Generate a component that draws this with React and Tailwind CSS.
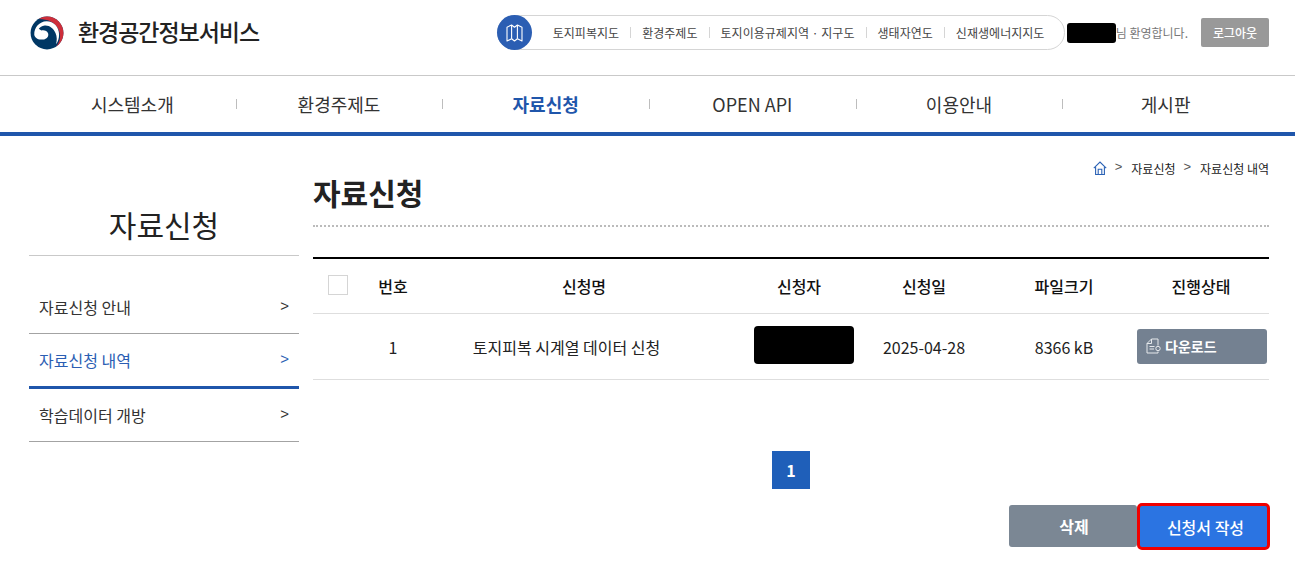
import React from "react";

function Logo() {
  return (
    <svg width="34" height="34" viewBox="0 0 36 36" className="shrink-0">
      <circle cx="18" cy="18" r="17.4" fill="#003764" />
      <path d="M9.5 3.2C12 1.500 15 0.600 18 0.600C27.600 0.600 35.400 8.400 35.400 18C35.400 24 32.400 29.400 27.500 32.600C30.800 28.600 32.200 24.200 31.800 20C31 11.500 24 5 16 4C14 3.700 11.500 3.400 9.500 3.200Z" fill="#cd2e3a" />
      <path d="M4.500 20C4.300 12 10 5.800 17.500 5.600C25 5.500 30.800 11.500 30.800 19.500C30.800 23.500 29.800 27 27.500 30C28.700 26 28.700 22 27 18C25 13 20.500 9.500 15.500 10C12.500 10.300 10.500 11.800 9.300 13.500L12 15.300C15 14.500 18.200 15.800 19.200 18.500C20 21.500 18 24 15 24.800C11 25.500 6 24.500 4.500 20Z" fill="#ffffff" />
    </svg>
  );
}

function HomeIcon() {
  return (
    <svg width="14" height="15" viewBox="0 0 14 15" fill="none" stroke="#2b62b5" strokeWidth="1.1" className="shrink-0">
      <path d="M0.8 7.2 7 1l6.2 6.2" />
      <path d="M2.6 6v7.5h8.8V6" />
      <path d="M5.2 13.5V8.3h3.6v5.2" />
    </svg>
  );
}

function FileIcon() {
  return (
    <svg width="16" height="16" viewBox="0 0 16 16" fill="none" stroke="#e5e8eb" strokeWidth="1" className="shrink-0">
      <path d="M12 7.500V1H5.500L1 5.500V15h11v-1.500" />
      <path d="M1 5.500h4.500V1" />
      <path d="M3.500 8.500h5M3.500 11h4.500" />
      <circle cx="12" cy="10.500" r="2.200" />
    </svg>
  );
}

function MapIcon() {
  return (
    <svg width="17" height="18" viewBox="0 0 17 18" fill="none" stroke="#ffffff" strokeWidth="1.1" strokeLinejoin="round">
      <path d="M1 3.200 5.600 1l2.900 2.200L11.400 1 16 3.200V17l-4.600-2.200L8.500 17l-2.900-2.200L1 17z" />
      <path d="M5.600 1v13.800M11.400 1v13.800" />
    </svg>
  );
}

const quick = ["토지피복지도", "환경주제도", "토지이용규제지역 · 지구도", "생태자연도", "신재생에너지지도"];
const nav = ["시스템소개", "환경주제도", "자료신청", "OPEN API", "이용안내", "게시판"];

function Header() {
  return (
    <header className="h-[76px] border-b border-[#c9c9c9] flex items-center pl-[30px] pr-[26px] pb-[10px]">
      <Logo />
      <span className="ml-[14px] -mt-[3px] text-[23px] font-medium text-[#222] tracking-[-1.05px] leading-none">환경공간정보서비스</span>
      <div className="ml-auto flex items-center">
        <div className="relative flex items-center h-[35px] w-[568px] border border-[#d5d5d5] rounded-full pl-[55px]">
          <span className="absolute -left-px -top-px w-[35px] h-[35px] rounded-full bg-[#2b5eb3] flex items-center justify-center">
            <MapIcon />
          </span>
          {quick.map((q, i) => (
            <React.Fragment key={q}>
              {i > 0 && <span className="w-px h-[11px] bg-[#d5d5d5] mx-[11px]" />}
              <span className="text-[12px] text-[#444] whitespace-nowrap tracking-[0.03px]">{q}</span>
            </React.Fragment>
          ))}
        </div>
        <span className="ml-[2px] w-[49px] h-[20px] bg-black rounded-[3px]" />
        <span className="text-[12px] text-[#777] whitespace-nowrap">님 환영합니다.</span>
        <span className="ml-[13px] w-[68px] h-[29px] rounded-[2px] bg-[#999] text-white text-[12px] font-medium flex items-center justify-center">로그아웃</span>
      </div>
    </header>
  );
}

function Nav() {
  return (
    <nav className="h-[60px] border-b-[4px] border-[#1f56ab] grid grid-cols-6 pl-[29px] pr-[26px]">
      {nav.map((n, i) => (
        <div key={n} className="relative flex items-center justify-center">
          <span className={"text-[18px] " + (i === 2 ? "font-bold text-[#1f56ab]" : "text-[#333]")}>{n}</span>
          {i > 0 && <span className="absolute left-0 top-[23px] w-px h-[10px] bg-[#bdbdbd]" />}
        </div>
      ))}
    </nav>
  );
}

function SideItem({ label, active, className }) {
  return (
    <div className={"flex items-center justify-between pl-[10px] pr-[10px] text-[16px] " + (active ? "text-[#2b5eb3] " : "text-[#333] ") + className}>
      <span>{label}</span>
      <span className="text-[15px] leading-none -mt-[4px] font-['Liberation_Sans',sans-serif]">&gt;</span>
    </div>
  );
}

function Sidebar() {
  return (
    <aside className="w-[270px] shrink-0">
      <div className="h-[120px] border-b border-[#c9c9c9] flex items-end justify-center pb-[16px]">
        <h2 className="text-[30px] text-[#222] leading-none">자료신청</h2>
      </div>
      <div className="pt-[27px]">
        <SideItem label="자료신청 안내" className="h-[51px] pb-[2px] border-b border-[#a3a3a3]" />
        <SideItem active label="자료신청 내역" className="h-[55px] border-b-[3px] border-[#1f56ab]" />
        <SideItem label="학습데이터 개방" className="h-[53px] border-b border-[#a3a3a3]" />
      </div>
    </aside>
  );
}

const cols = "grid grid-cols-[50px_60px_322px_108px_142px_138px_136px] items-center";

function Main() {
  return (
    <main className="ml-[14px] w-[956px] relative">
      <div className="absolute right-0 top-[25px] flex items-center text-[12px] text-[#222] leading-none">
        <HomeIcon />
        <span className="ml-[8px] mr-[9px] text-[#555] text-[13px] -mt-[4px] font-['Liberation_Sans',sans-serif]">&gt;</span>
        <span>자료신청</span>
        <span className="ml-[8px] mr-[9px] text-[#555] text-[13px] -mt-[4px] font-['Liberation_Sans',sans-serif]">&gt;</span>
        <span>자료신청 내역</span>
      </div>
      <div className="h-[91px] border-b-2 border-dotted border-[#bbb] pt-[36px]">
        <h1 className="text-[30px] font-bold text-[#222] leading-[40px]">자료신청</h1>
      </div>
      <div className="mt-[30px] border-t-2 border-black">
        <div className={cols + " h-[55px] border-b border-[#dedede] text-[16px] font-medium text-[#111] text-center"}>
          <span className="ml-[15px] w-[20px] h-[20px] border border-[#d5d5d5] -mt-[2px]" />
          <span>번호</span>
          <span>신청명</span>
          <span>신청자</span>
          <span>신청일</span>
          <span>파일크기</span>
          <span>진행상태</span>
        </div>
        <div className={cols + " h-[66px] border-b border-[#dedede] text-[16px] text-[#222] text-center"}>
          <span />
          <span>1</span>
          <span className="pr-[35px]">토지피복 시계열 데이터 신청</span>
          <span className="justify-self-center ml-[10px] w-[100px] h-[38px] bg-black rounded-[4px] -mt-[3px]" />
          <span>2025-04-28</span>
          <span>8366 kB</span>
          <span className="justify-self-end mr-[2px] w-[130px] h-[35px] rounded-[3px] bg-[#748191] text-[#fff] text-[14px] font-bold flex items-center pl-[9px] gap-[3px] -mt-[1px]">
            <FileIcon />
            <span>다운로드</span>
          </span>
        </div>
      </div>
      <div className="mt-[71px] flex justify-center">
        <span className="w-[38px] h-[38px] bg-[#1f5fb9] text-white text-[16px] font-bold flex items-center justify-center">1</span>
      </div>
      <div className="mt-[14px] flex justify-end -mr-[1px]">
        <button className="w-[128px] h-[42px] mt-[2px] pl-[2px] bg-[#7b8794] rounded-[3px] text-white text-[16px] font-bold">삭제</button>
        <button className="w-[133px] h-[47px] pl-[4px] bg-[#2b74e2] rounded-[5px] border-[3px] border-[#f00000] text-white text-[16px] font-medium">신청서 작성</button>
      </div>
    </main>
  );
}

export default function App() {
  return (
    <div className="w-[1295px] h-[578px] overflow-hidden bg-white font-['Noto_Sans_CJK_KR','Noto_Sans',sans-serif]">
      <Header />
      <Nav />
      <div className="flex pl-[29px]">
        <Sidebar />
        <Main />
      </div>
    </div>
  );
}
